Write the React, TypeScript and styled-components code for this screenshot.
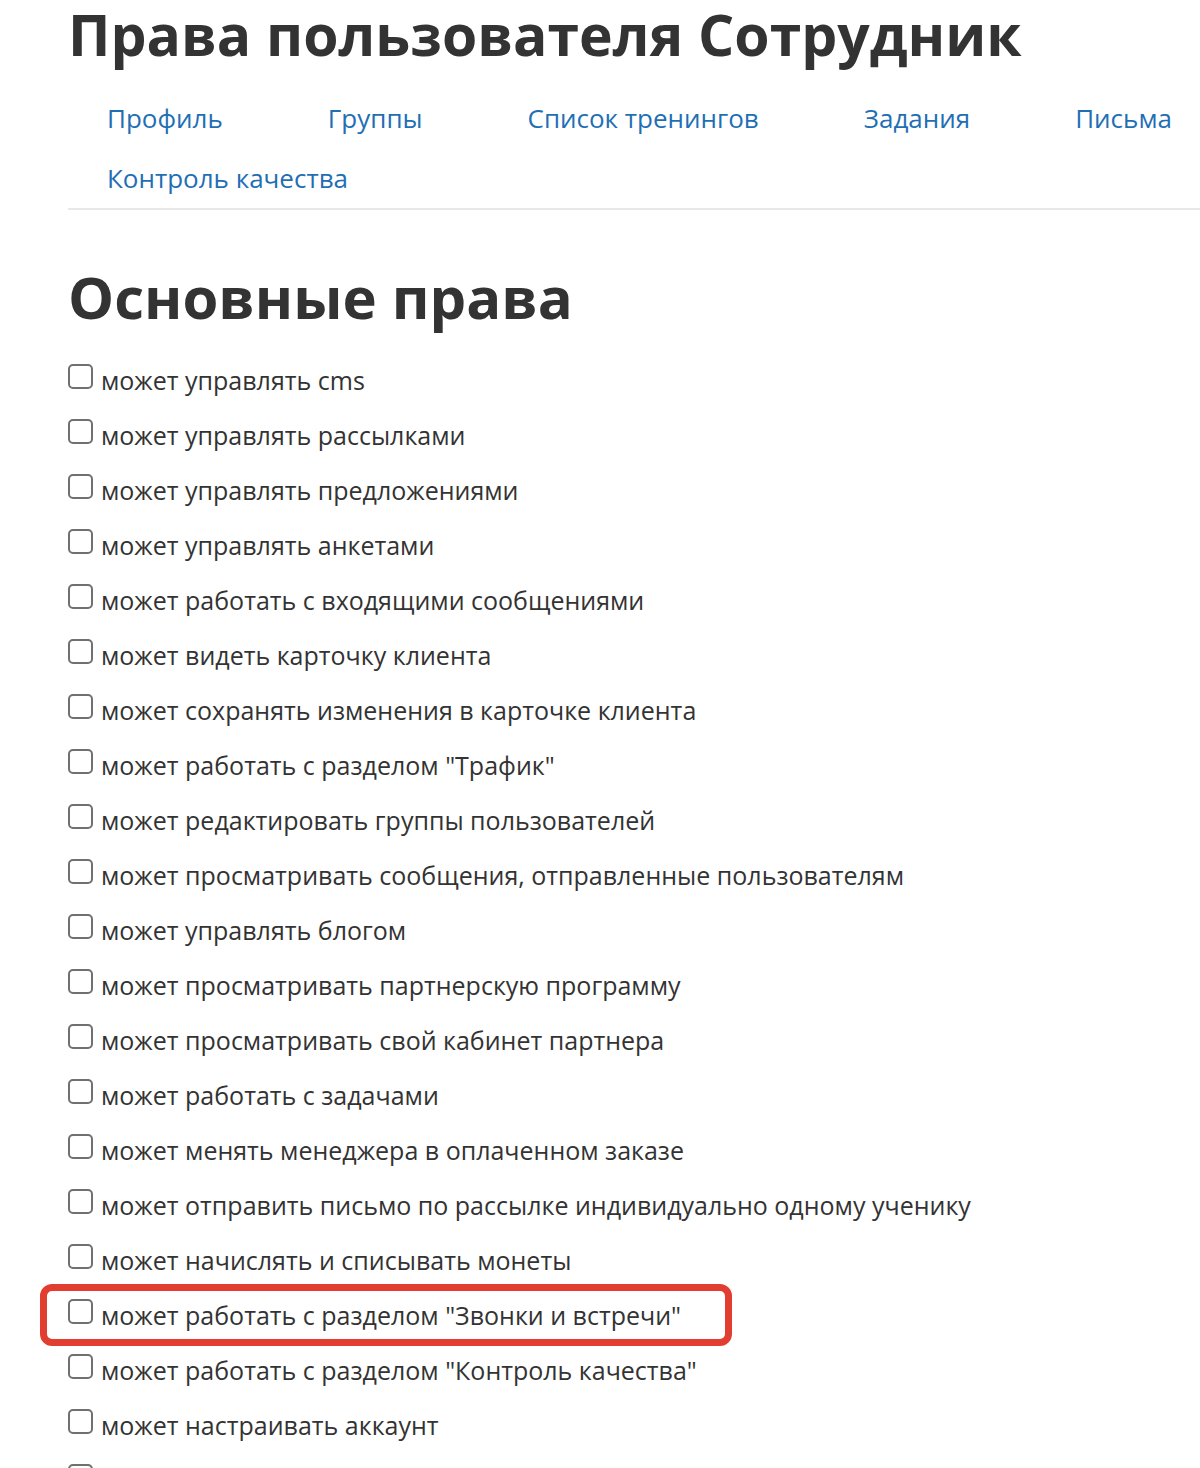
import styled, { createGlobalStyle } from "styled-components";

const GlobalStyle = createGlobalStyle`
  body {
    margin: 0;
    background: #fff;
    font-family: "Open Sans", "Noto Sans", sans-serif;
    color: #333;
  }
`;

const tabs = [
  "Профиль",
  "Группы",
  "Список тренингов",
  "Задания",
  "Письма",
  "Контроль качества",
];

const rights = [
  "может управлять cms",
  "может управлять рассылками",
  "может управлять предложениями",
  "может управлять анкетами",
  "может работать с входящими сообщениями",
  "может видеть карточку клиента",
  "может сохранять изменения в карточке клиента",
  'может работать с разделом "Трафик"',
  "может редактировать группы пользователей",
  "может просматривать сообщения, отправленные пользователям",
  "может управлять блогом",
  "может просматривать партнерскую программу",
  "может просматривать свой кабинет партнера",
  "может работать с задачами",
  "может менять менеджера в оплаченном заказе",
  "может отправить письмо по рассылке индивидуально одному ученику",
  "может начислять и списывать монеты",
  'может работать с разделом "Звонки и встречи"',
  'может работать с разделом "Контроль качества"',
  "может настраивать аккаунт",
  "может управлять вебинарами",
];

const App = () => {
  return (
    <Page>
      <GlobalStyle />
      <Title>Права пользователя Сотрудник</Title>
      <Tabs>
        {tabs.map((tab) => (
          <Tab key={tab} href="#">
            {tab}
          </Tab>
        ))}
      </Tabs>
      <Section>Основные права</Section>
      <List>
        {rights.map((right) => (
          <Item key={right} $marked={right.includes("Звонки")}>
            <Box type="checkbox" />
            <Label>{right}</Label>
          </Item>
        ))}
      </List>
    </Page>
  );
};

const Page = styled.div`
  padding-left: 68px;
  overflow: hidden;
  height: 1468px;
`;

const Title = styled.h1`
  margin: 0;
  font-size: 57px;
  line-height: 68px;
  font-weight: 700;
  color: #333;
  white-space: nowrap;
`;

const Tabs = styled.nav`
  display: flex;
  flex-wrap: wrap;
  column-gap: 105px;
  padding: 20px 0 0 39px;
  border-bottom: 2px solid #e8e8e8;
`;

const Tab = styled.a`
  font-size: 26px;
  line-height: 60px;
  color: #1f6fb5;
  text-decoration: none;
`;

const Section = styled.h2`
  margin: 52px 0 20px;
  font-size: 58px;
  line-height: 70px;
  font-weight: 700;
  color: #333;
`;

const List = styled.div`
  display: flex;
  flex-direction: column;
`;

const Item = styled.label<{ $marked?: boolean }>`
  position: relative;
  display: flex;
  align-items: center;
  gap: 8px;
  height: 55px;

  &::after {
    content: "";
    display: ${({ $marked }) => ($marked ? "block" : "none")};
    position: absolute;
    left: -28px;
    top: -3px;
    width: 692px;
    height: 62px;
    border: 7px solid #e23d31;
    border-radius: 12px;
    box-sizing: border-box;
  }
`;

const Box = styled.input`
  appearance: none;
  margin: 0 0 6px;
  width: 25px;
  height: 25px;
  flex-shrink: 0;
  border: 2px solid #707070;
  border-radius: 5px;
  background: #fff;
  box-sizing: border-box;
`;

const Label = styled.span`
  font-size: 25px;
  color: #333;
`;

export default App;
